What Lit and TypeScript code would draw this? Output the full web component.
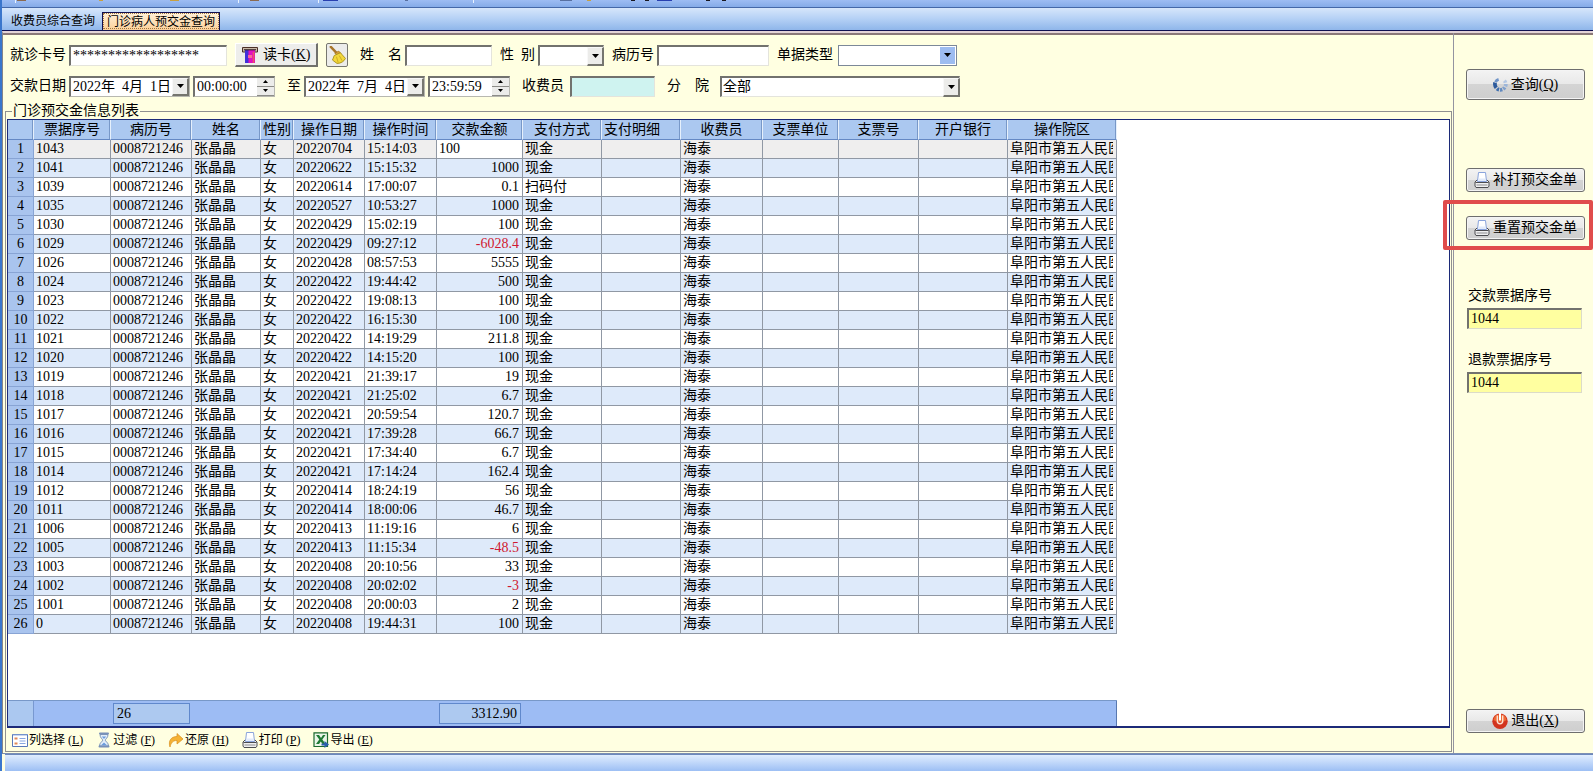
import { LitElement, html, css, svg, nothing } from "lit";
import { customElement, state } from "lit/decorators.js";
import { classMap } from "lit/directives/class-map.js";

interface Column {
  title: string;
  width: number;
  align?: "left" | "right";
}

const INDEX_WIDTH = 26;

const COLUMNS: Column[] = [
  { title: "票据序号", width: 77 },
  { title: "病历号", width: 81 },
  { title: "姓名", width: 69 },
  { title: "性别", width: 33 },
  { title: "操作日期", width: 71 },
  { title: "操作时间", width: 72 },
  { title: "交款金额", width: 86, align: "right" },
  { title: "支付方式", width: 79 },
  { title: "支付明细", width: 79, align: "left" },
  { title: "收费员", width: 82 },
  { title: "支票单位", width: 76 },
  { title: "支票号", width: 80 },
  { title: "开户银行", width: 89 },
  { title: "操作院区", width: 109 },
];

const AMOUNT = 6;

// ticket number, date, time, amount, payment method
type Entry = [string, string, string, string, string?];

const ENTRIES: Entry[] = [
  ["1043", "20220704", "15:14:03", "100"],
  ["1041", "20220622", "15:15:32", "1000"],
  ["1039", "20220614", "17:00:07", "0.1", "扫码付"],
  ["1035", "20220527", "10:53:27", "1000"],
  ["1030", "20220429", "15:02:19", "100"],
  ["1029", "20220429", "09:27:12", "-6028.4"],
  ["1026", "20220428", "08:57:53", "5555"],
  ["1024", "20220422", "19:44:42", "500"],
  ["1023", "20220422", "19:08:13", "100"],
  ["1022", "20220422", "16:15:30", "100"],
  ["1021", "20220422", "14:19:29", "211.8"],
  ["1020", "20220422", "14:15:20", "100"],
  ["1019", "20220421", "21:39:17", "19"],
  ["1018", "20220421", "21:25:02", "6.7"],
  ["1017", "20220421", "20:59:54", "120.7"],
  ["1016", "20220421", "17:39:28", "66.7"],
  ["1015", "20220421", "17:34:40", "6.7"],
  ["1014", "20220421", "17:14:24", "162.4"],
  ["1012", "20220414", "18:24:19", "56"],
  ["1011", "20220414", "18:00:06", "46.7"],
  ["1006", "20220413", "11:19:16", "6"],
  ["1005", "20220413", "11:15:34", "-48.5"],
  ["1003", "20220408", "20:10:56", "33"],
  ["1002", "20220408", "20:02:02", "-3"],
  ["1001", "20220408", "20:00:03", "2"],
  ["0", "20220408", "19:44:31", "100"],
];

const toCells = ([no, date, time, amount, method = "现金"]: Entry) => [
  no, "0008721246", "张晶晶", "女", date, time, amount, method,
  "", "海泰", "", "", "", "阜阳市第五人民医院",
];

const icon = (body: unknown, size = 16) =>
  html`<svg width=${size} height=${size} viewBox="0 0 16 16" aria-hidden="true">${body}</svg>`;

const printerIcon = icon(svg`
  <path d="M3 8 1 10v4l1 1.500h12l1-1.500v-4l-2-2z" fill="#f0f0f0" stroke="#4c4c50"/>
  <path d="M3.500 9.500 4.500.5h7l1 9z" fill="#fff" stroke="#8aa4dc"/>
  <path d="M5 6.500h6l.5 2.500h-7z" fill="#e2ebfb"/>
  <path d="M1.500 10.500h13" stroke="#4c4c50"/>
  <path d="M2.500 13h11" stroke="#8c8c90"/>`);

const cardIcon = icon(svg`
  <path d="M.5 .5h15v4.500H.5z" fill="#c8b8a8" stroke="#4a3028"/>
  <path d="M3 3h10v13H3z" fill="#e010c0"/>
  <path d="M3 3h3.500v13H3z" fill="#4030d8"/>
  <path d="M2 2.800h12" stroke="#201018"/>
  <path d="M11.500 5v11" stroke="#f05068" stroke-width="1.500"/>
  <path d="M6 8h4v3H6z" fill="#f86898"/>`);

const broomIcon = icon(svg`
  <path d="M2.500.8 8 6.500" stroke="#a8762a" stroke-width="2.200" stroke-linecap="round"/>
  <path d="M6 6.500 9.500 4.500l2 2L10 10z" fill="#d8a038" stroke="#9a7020" stroke-width=".6"/>
  <path d="M5.500 8.500 11 6l4.500 5c-1 2.500-4 4.500-7.500 4.500L4 12.500z" fill="#f2d83a" stroke="#a8901c" stroke-width=".8"/>
  <path d="m7.500 9.500 1.500 5M10 8.500l2.500 4.500" stroke="#c9a820" stroke-width=".8"/>`, 18);

const spinnerIcon = icon(svg`
  <g fill="none" stroke-width="4">
    <path d="M2.300 6A6 6 0 0 0 3.500 11.500" stroke="#2d5a9c"/>
    <path d="M4.300 12.300A5.600 5.600 0 0 0 6.500 13.500" stroke="#3f6eae"/>
    <path d="M7.500 13.700a5.600 5.600 0 0 0 2.400-.3" stroke="#6088be"/>
    <path d="M10.900 12.900a5.600 5.600 0 0 0 1.600-1.800" stroke="#7f9fcc"/>
    <path d="M13.200 10a5.600 5.600 0 0 0 .5-2.500" stroke="#9cb5d8"/>
    <path d="M13.400 6.200a5.600 5.600 0 0 0-1.300-2.200" stroke="#b4c8e4"/>
    <path d="M2.600 5.500A5.600 5.600 0 0 1 6 2.500" stroke="#6f94c8" stroke-width="3"/>
  </g>`, 15);

const powerIcon = icon(svg`
  <circle cx="8" cy="8.200" r="7.700" fill="#d2341e"/>
  <path d="M1.500 7a6.600 6.600 0 0 1 13 0C12 9.500 4 9.500 1.500 7z" fill="#ee6a34"/>
  <path d="M5.300 2.500v5.500a2.700 2.700 0 0 0 5.400 0V2.500" fill="none" stroke="#fbe0d0" stroke-width="1.400"/>
  <path d="M8 0v7.500" stroke="#fff" stroke-width="2"/>`);

const listIcon = icon(svg`
  <path d="M.5 2.500h15v12H.5z" fill="#fff" stroke="#5878b8"/>
  <path d="M1 3h14" stroke="#90aee0"/>
  <path d="M2.500 5.500h3v2h-3zM2.500 10.500h3v2h-3z" fill="#e08a58"/>
  <path d="M7.500 6.500h6M7.500 9h6M7.500 11.500h6" stroke="#88a8e0"/>`);

const hourglassIcon = icon(svg`
  <path d="M4 2.500h8C12 6 9.300 7 9.300 8.200S12.500 10.500 12.500 14h-9c0-3.500 3.200-4.500 3.200-5.800S4 6 4 2.500z" fill="#e3eefa" stroke="#8098b8"/>
  <path d="M4 1.500h8M3.500 14.500h9" stroke="#7890b8" stroke-width="2" stroke-linecap="round"/>
  <path d="M5.800 4.500h4.400L8 7zM5 13.300 8 10.500l3 2.800z" fill="#6c9cdc"/>`);

const redoIcon = icon(svg`
  <path d="M2 15C0 9 3 4.500 9 4.500V1.500L15 7 9 12V8.500C5 8.500 3 10.500 2 15z" fill="#f5b335" stroke="#d88e1c" stroke-width=".7"/>`);

const excelIcon = icon(svg`
  <path d="M1 .8h13.500v13.700H1z" fill="#eaf5e8" stroke="#1d6a2e" stroke-width="1.200"/>
  <path d="M3 3h3l2 3 2-3h2.500L9.300 7.500 12.500 12h-3L7.800 9.500 6 12H3l3.300-4.500z" fill="#1f7a34"/>
  <path d="M8.500 11.500h3V9l4.500 3.500-4.500 3.500v-2.500h-3z" fill="#2c5fb0"/>`);

const arrow = html`<svg class="arrow" width="7" height="4" viewBox="0 0 7 4" aria-hidden="true">
  <path d="M0 0h7L3.500 4z" fill="#000"/></svg>`;

@customElement("app-root")
export class AppRoot extends LitElement {
  @state() private selected = 0;

  static styles = css`
    :host {
      display: flex;
      flex-direction: column;
      box-sizing: border-box;
      min-height: 100vh;
      border-left: 2px solid #3a76cc;
      background: #ffffe1;
      color: #000;
      font: 14px/18px "Liberation Serif", "Noto Sans CJK SC", serif;
    }
    *, *::before { box-sizing: border-box; }
    input, select, button {
      font: inherit;
      color: inherit;
      margin: 0;
      border-radius: 0;
      min-width: 0;
      white-space: nowrap;
    }
    svg { display: block; flex: none; }
    u { text-underline-offset: 1px; }

    .strip {
      height: 8px;
      overflow: hidden;
      background: linear-gradient(#9dbdf3, #85abe8);
      border-bottom: 1px solid #4468a8;
    }
    .tabs {
      display: flex;
      align-items: flex-end;
      height: 23px;
      padding-left: 2px;
      background: linear-gradient(#d6e6fb, #b4d0f5 50%, #8fb6ea);
      border-bottom: 1px solid #101050;
    }
    .tab {
      height: 18px;
      padding: 0 7px;
      border: 0;
      background: none;
      font-size: 12px;
      line-height: 18px;
    }
    .tab.active {
      padding: 0 4px;
      border: 1px solid #101050;
      border-bottom: 0;
      outline: 1px dotted #a07840;
      outline-offset: -2px;
      background: linear-gradient(#fff0d8, #fbd09a);
    }
    .main {
      flex: 1;
      display: flex;
      border-top: 2px solid #e4d3d6;
      border-left: 1px solid #85858a;
      border-bottom: 1px solid #7c8fb4;
      box-shadow: inset 0 2px #8a7878;
    }
    .left {
      flex: 1;
      min-width: 0;
      display: flex;
      flex-direction: column;
      padding: 10px 1px 1px 2px;
    }
    .status {
      height: 17px;
      margin-left: 3px;
      border-top: 1px solid #6c88bc;
      background: linear-gradient(#e0edff, #9dbff4);
    }

    .row {
      display: flex;
      align-items: center;
      gap: 8px;
      height: 24px;
      padding-left: 5px;
    }
    .row.second { margin: 7px 0 5px; }
    .field { display: flex; align-items: center; gap: 3px; white-space: nowrap; }
    .field.loose { margin-left: 4px; }
    .spread { text-align-last: justify; }
    .w35 { width: 35px; }
    .w42 { width: 42px; }
    .text {
      height: 21px;
      padding: 0 2px;
      border: 1px solid #e4e4dc;
      border-top: 2px solid #72726e;
      border-left: 2px solid #72726e;
      background: #fff;
    }
    .card { width: 158px; }
    .name { width: 87px; }
    .record { width: 112px; }
    .cashier { width: 85px; margin-left: 3px; background: #cff3f0; }
    .sunken {
      display: flex;
      height: 21px;
      border: 1px solid #b8b8b0;
      border-top: 2px solid #72726e;
      border-left: 2px solid #72726e;
      background: #fff;
    }
    .sunken input { flex: 1; border: 0; padding: 0 2px; background: none; }
    .date { width: 121px; }
    .time { width: 82px; }
    .drop {
      display: grid;
      place-items: center;
      width: 17px;
      padding: 0;
      border: 1px solid #f8f8f8;
      border-right: 2px solid #75756f;
      border-bottom: 2px solid #75756f;
      background: #ececea;
    }
    .spin { display: grid; width: 17px; }
    .spin button {
      display: grid;
      place-items: center;
      padding: 0;
      border: 0;
      border-bottom: 1px solid #8c8c88;
      background: #ececea;
    }
    .combo { display: grid; height: 21px; }
    .combo > * { grid-area: 1 / 1; }
    .combo select {
      appearance: none;
      width: 100%;
      padding: 0 20px 0 1px;
      border: 1px solid #e4e4dc;
      border-top: 2px solid #72726e;
      border-left: 2px solid #72726e;
      background: #fff;
    }
    .combo .drop { justify-self: end; height: 19px; margin-top: 2px; pointer-events: none; }
    .combo.flat select { border: 1px solid #7c8898; }
    .combo.flat .drop { width: 15px; height: 17px; margin: 2px; border: 0; background: #9dbcf0; }
    .sex { width: 66px; }
    .kind { width: 119px; margin-left: 2px; }
    .branch { width: 240px; margin-left: 8px; }
    .read {
      display: flex;
      align-items: center;
      gap: 5px;
      width: 83px;
      height: 24px;
      padding: 0 0 0 6px;
      border: 1px solid #fff;
      border-right: 2px solid #70706c;
      border-bottom: 2px solid #70706c;
      background: #ededeb;
    }
    .broom {
      display: grid;
      place-items: center;
      width: 22px;
      height: 24px;
      padding: 0;
      border: 1px solid #77776f;
      border-radius: 2px;
      background: #ececea;
    }

    fieldset {
      flex: 1;
      display: flex;
      flex-direction: column;
      min-width: 0;
      margin: 0;
      padding: 0 1px;
      border: 1px solid #909090;
    }
    legend { margin-left: 5px; padding: 0 1px; line-height: 16px; }
    .grid {
      flex: 1;
      display: flex;
      flex-direction: column;
      border: 1px solid #1c2a78;
      border-bottom-width: 2px;
      background: #fff;
      overflow: hidden;
    }
    table { border-collapse: separate; border-spacing: 0; table-layout: fixed; width: 0; }
    th, td {
      padding: 0 2px;
      overflow: hidden;
      white-space: nowrap;
      font-weight: normal;
      border-right: 1px solid #9098a4;
      border-bottom: 1px solid #9098a4;
    }
    td { height: 19px; line-height: 18px; }
    thead th {
      height: 20px;
      line-height: 18px;
      background: #abc8f0;
      border-right-color: #e6f0fc;
      border-bottom-color: #6488c4;
      box-shadow: inset -1px 0 #7898c8;
    }
    th.start { text-align: left; }
    .index { width: 26px; text-align: center; background: #a9c4ee; border-right-color: #88a4d4; border-bottom-color: #88a4d4; }
    .end { text-align: right; }
    td.end { padding-right: 3px; }
    .even { background: #deeafa; }
    .current { background: #efeeee; }
    .negative { color: #d01830; }
    td.edit { padding: 0; background: #fff; }
    .edit input { display: block; width: 100%; height: 18px; padding: 0 2px; border: 0; background: none; }
    .clip { overflow: hidden; margin-right: 1px; }
    .totals {
      display: grid;
      width: max-content;
      height: 26px;
      margin-top: auto;
      border-top: 1px solid #7898c8;
      box-shadow: inset -1px 0 #5878b0;
      background: #9dbcf4;
    }
    .corner { background: #abc8f0; border-right: 1px solid #7898d0; }
    .total {
      margin: 2px 2px 2px 2px;
      padding: 0 3px;
      border: 1px solid #6088cc;
      background: #adc9f0;
      line-height: 19px;
    }
    .tools {
      display: flex;
      align-items: center;
      gap: 13px;
      height: 23px;
      padding: 1px 0 0 5px;
      font-size: 12px;
    }
    .tool {
      display: flex;
      align-items: center;
      gap: 1px;
      padding: 0;
      border: 0;
      background: none;
    }
    .tool span { padding-left: 2px; }

    .side {
      display: flex;
      flex-direction: column;
      width: 140px;
      padding: 36px 8px 20px 12px;
      border-left: 1px solid #9494a0;
    }
    .push {
      display: flex;
      align-items: center;
      justify-content: center;
      gap: 3px;
      width: 100%;
      height: 24px;
      padding: 0;
      border: 1px solid #6e6e6e;
      border-radius: 3px;
      background: linear-gradient(#f3f3f3, #e8e8e8 50%, #d4d4d4 50%, #cecece);
      box-shadow: inset 0 0 0 1px #f4f4f4;
    }
    .push.tall { height: 31px; margin-bottom: 68px; }
    .marked { position: relative; margin: 24px 0 47px; }
    .marked::after {
      content: "";
      position: absolute;
      inset: -16px -8px -10px -23px;
      border: 4px solid #e04c4c;
      border-radius: 2px;
      pointer-events: none;
    }
    .serial { display: flex; flex-direction: column; gap: 3px; margin-bottom: 22px; padding: 0 3px 0 1px; }
    .serial label { padding-left: 1px; }
    .serial input { background: #ffffa0; border-color: #72726e #dcdcc8 #dcdcc8 #72726e; }
    .exit { margin-top: auto; }
  `;

  private dateField(label: string, value: string) {
    return html`<span class="sunken date">
      <input type="text" aria-label=${label} .value=${value} />
      <button class="drop" aria-label="选择日期">${arrow}</button>
    </span>`;
  }

  private timeField(label: string, value: string) {
    return html`<span class="sunken time">
      <input type="text" aria-label=${label} .value=${value} />
      <span class="spin">
        <button aria-label="增加"><svg width="5" height="3" viewBox="0 0 5 3"><path d="M0 3h5L2.500 0z"/></svg></button>
        <button aria-label="减少"><svg width="5" height="3" viewBox="0 0 5 3"><path d="M0 0h5L2.500 3z"/></svg></button>
      </span>
    </span>`;
  }

  private tool(glyph: unknown, label: string, key: string) {
    return html`<button class="tool">${glyph}${label}<span>(<u>${key}</u>)</span></button>`;
  }

  private renderCell(text: string, col: number, row: number) {
    if (col === AMOUNT && row === this.selected) {
      return html`<td class="edit"><input type="text" aria-label="交款金额" .value=${text} /></td>`;
    }
    const end = COLUMNS[col].align === "right";
    return html`<td class=${classMap({ end, negative: end && text.startsWith("-") })}>
      ${col === COLUMNS.length - 1 ? html`<div class="clip">${text}</div>` : text}</td>`;
  }

  private renderGrid() {
    const tracks = [INDEX_WIDTH, ...COLUMNS.map((c) => c.width)].map((w) => `${w}px`).join(" ");
    return html`
      <div class="grid">
        <table>
          <colgroup>
            <col style="width:${INDEX_WIDTH}px" />
            ${COLUMNS.map((c) => html`<col style="width:${c.width}px" />`)}
          </colgroup>
          <thead>
            <tr>
              <th></th>
              ${COLUMNS.map((c) => html`<th scope="col" class=${c.align === "left" ? "start" : nothing}>${c.title}</th>`)}
            </tr>
          </thead>
          <tbody>
            ${ENTRIES.map((entry, i) => html`
              <tr class=${classMap({ even: i % 2 === 1, current: i === this.selected })}
                  @click=${() => (this.selected = i)}>
                <th class="index" scope="row">${i + 1}</th>
                ${toCells(entry).map((text, c) => this.renderCell(text, c, i))}
              </tr>`)}
          </tbody>
        </table>
        <div class="totals" style="grid-template-columns:${tracks}">
          <span class="corner"></span>
          <span></span>
          <output class="total">26</output>
          <span></span><span></span><span></span><span></span>
          <output class="total end">3312.90</output>
        </div>
      </div>`;
  }

  render() {
    return html`
      <div class="strip">
        <svg width="740" height="4" viewBox="0 0 740 4" aria-hidden="true">
          <path d="M13 0h1v3h-1zM236 0h1v3h-1zM316 0h1v3h-1zM471 0h1v3h-1z" fill="#e8f2ff"/>
          <path d="M15 0h9v1h-9zM248 0h9v1h-9z" fill="#8a6a50"/>
          <path d="M97 0h4v1h-4zM168 0h9v1h-9zM585 0h4v1h-4z" fill="#c8a040"/>
          <path d="M321 0h15v1h-15zM655 0h15v1h-15z" fill="#2840b0"/>
          <path d="M403 0h3v1h-3zM558 0h12v1h-12z" fill="#5870a0"/>
          <path d="M629 0h4v1h-4zM643 0h4v1h-4zM704 0h4v1h-4zM720 0h4v1h-4z" fill="#181820"/>
        </svg>
      </div>
      <nav class="tabs">
        <button class="tab">收费员综合查询</button>
        <button class="tab active">门诊病人预交金查询</button>
      </nav>
      <div class="main">
        <div class="left">
          <div class="row">
            <span class="field"><label for="card">就诊卡号</label>
              <input id="card" class="text card" type="text" value="******************" /></span>
            <button class="read">${cardIcon}<span>读卡(<u>K</u>)</span></button>
            <button class="broom" aria-label="清空">${broomIcon}</button>
            <span class="field loose"><label class="spread w42" for="name">姓 名</label>
              <input id="name" class="text name" type="text" /></span>
            <span class="field"><label class="spread w35" for="sex">性 别</label>
              <span class="combo sex"><select id="sex"><option></option><option>男</option><option>女</option></select>
                <span class="drop">${arrow}</span></span></span>
            <span class="field"><label for="record">病历号</label>
              <input id="record" class="text record" type="text" /></span>
            <span class="field"><label for="kind">单据类型</label>
              <span class="combo flat kind"><select id="kind"><option></option></select>
                <span class="drop">${arrow}</span></span></span>
          </div>
          <div class="row second">
            <span class="field"><span>交款日期</span>
              ${this.dateField("开始日期", "2022年  4月  1日")}
              ${this.timeField("开始时间", "00:00:00")}</span>
            <span class="field loose"><span>至</span>
              ${this.dateField("结束日期", "2022年  7月  4日")}
              ${this.timeField("结束时间", "23:59:59")}</span>
            <span class="field loose"><label for="cashier">收费员</label>
              <input id="cashier" class="text cashier" type="text" /></span>
            <span class="field loose"><label class="spread w42" for="branch">分 院</label>
              <span class="combo branch"><select id="branch"><option>全部</option></select>
                <span class="drop">${arrow}</span></span></span>
          </div>
          <fieldset>
            <legend>门诊预交金信息列表</legend>
            ${this.renderGrid()}
            <div class="tools">
              ${this.tool(listIcon, "列选择", "L")}
              ${this.tool(hourglassIcon, "过滤", "F")}
              ${this.tool(redoIcon, "还原", "H")}
              ${this.tool(printerIcon, "打印", "P")}
              ${this.tool(excelIcon, "导出", "E")}
            </div>
          </fieldset>
        </div>
        <aside class="side">
          <button class="push tall">${spinnerIcon}<span>查询(<u>Q</u>)</span></button>
          <button class="push">${printerIcon}补打预交金单</button>
          <div class="marked"><button class="push">${printerIcon}重置预交金单</button></div>
          <div class="serial"><label for="paid">交款票据序号</label>
            <input id="paid" class="text" type="text" value="1044" /></div>
          <div class="serial"><label for="refund">退款票据序号</label>
            <input id="refund" class="text" type="text" value="1044" /></div>
          <button class="push exit">${powerIcon}<span>退出(<u>X</u>)</span></button>
        </aside>
      </div>
      <footer class="status"></footer>
    `;
  }
}
